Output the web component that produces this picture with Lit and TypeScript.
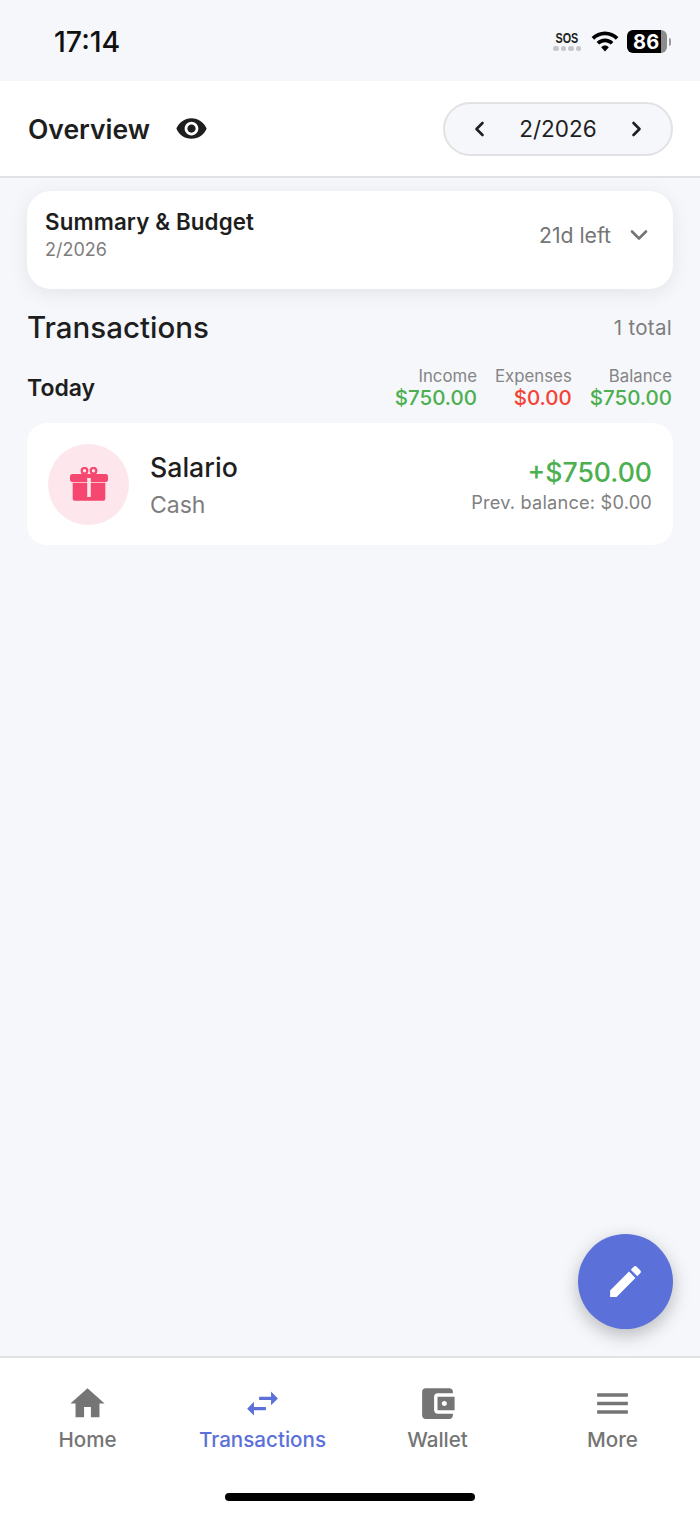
import { LitElement, html, css } from "lit";
import { customElement } from "lit/decorators.js";

const ICONS = {
  eye: "M12 4.5C7 4.5 2.73 7.61 1 12c1.73 4.39 6 7.5 11 7.5s9.27-3.11 11-7.5c-1.73-4.39-6-7.5-11-7.5zM12 17c-2.76 0-5-2.24-5-5s2.24-5 5-5 5 2.24 5 5-2.24 5-5 5zm0-8c-1.66 0-3 1.34-3 3s1.34 3 3 3 3-1.34 3-3-1.34-3-3-3z",
  home: "M10 20v-6h4v6h5v-8h3L12 3 2 12h3v8z",
  swap: "M6.99 11L3 15l3.99 4v-3H14v-2H6.99v-3zM21 9l-3.99-4v3H10v2h7.01v3L21 9z",
  wallet: "M21 18v1c0 1.1-.9 2-2 2H5c-1.11 0-2-.9-2-2V5c0-1.1.89-2 2-2h14c1.1 0 2 .9 2 2v1h-9c-1.11 0-2 .9-2 2v8c0 1.1.89 2 2 2h9zm-9-2h10V8H12v8zm4-2.5c-.83 0-1.5-.67-1.5-1.5s.67-1.5 1.5-1.5 1.5.67 1.5 1.5-.67 1.5-1.5 1.5z",
  menu: "M3 18h18v-2H3v2zm0-5h18v-2H3v2zm0-7v2h18V6H3z",
  edit: "M3 17.25V21h3.75L17.81 9.94l-3.75-3.75L3 17.25zM20.71 7.04c.39-.39.39-1.02 0-1.41l-2.34-2.34c-.39-.39-1.02-.39-1.41 0l-1.83 1.83 3.75 3.75 1.83-1.83z",
};

const icon = (d: string, size: number, cls = "") => html`<svg class=${cls} width=${size} height=${size} viewBox="0 0 24 24" fill="currentColor"><path d=${d}></path></svg>`;
const chevron = (points: string, w: number, h: number, sw: number, color: string) =>
  html`<svg width=${w} height=${h} viewBox="0 0 ${w} ${h}" fill="none" stroke=${color} stroke-width=${sw} stroke-linecap="round" stroke-linejoin="round"><polyline points=${points}></polyline></svg>`;

@customElement("app-root")
export class AppRoot extends LitElement {
  static styles = css`
    :host { display: flex; flex-direction: column; position: relative; height: 1515px; width: 700px; overflow: hidden; background: #f5f7fb; font-family: Inter, "Liberation Sans", sans-serif; color: #1f1f1f; }
    svg { display: block; flex: none; }
    .status { height: 81px; flex: none; display: flex; justify-content: space-between; align-items: center; padding: 0 29px 0 54px; box-sizing: border-box; }
    .time { font-size: 28.5px; font-weight: 500; color: #111; line-height: 1; margin-top: 3px; }
    .status-right { display: flex; align-items: center; gap: 8px; margin-top: 2px; }
    .sos { display: flex; flex-direction: column; align-items: center; gap: 2px; width: 28px; margin-right: 2px; }
    .sos-text { font-family: "Liberation Sans", sans-serif; font-size: 15px; font-weight: 700; line-height: 12px; color: #222; transform: scaleX(.72); }
    .dots { display: flex; gap: 2px; }
    .dots i { width: 5.5px; height: 5.5px; border-radius: 50%; background: #c6c6c8; }
    .battery { display: flex; align-items: center; gap: 2px; }
    .batt-body { width: 40px; height: 23px; border-radius: 6px; overflow: hidden; background: linear-gradient(90deg, #000 0 34px, #8c8c8e 34px); color: #fff; font-size: 20px; font-weight: 700; display: flex; align-items: center; padding-left: 6px; box-sizing: border-box; line-height: 1; letter-spacing: .3px; }
    .batt-tip { width: 2px; height: 8px; border-radius: 0 2px 2px 0; background: #9a9a9c; }
    .header { height: 97px; flex: none; box-sizing: border-box; background: #fff; border-bottom: 2px solid #e2e2e4; display: flex; align-items: center; justify-content: space-between; padding: 0 27px 0 28px; }
    .h-left { display: flex; align-items: center; gap: 25px; }
    .h-title { font-size: 26.5px; font-weight: 600; color: #1e1e1e; }
    .eye { color: #1e1e1e; }
    .month { width: 230px; height: 54px; box-sizing: border-box; border: 2px solid #e2e2e4; border-radius: 27px; background: #f5f7fb; display: flex; align-items: center; justify-content: space-between; padding: 0 27px; font-size: 22.5px; color: #1f1f1f; }
    .content { flex: 1; min-height: 0; display: flex; flex-direction: column; padding: 13px 28px 0; }
    .summary { height: 98px; flex: none; margin: 0 -1px; box-sizing: border-box; background: #fff; border-radius: 24px; box-shadow: 0 4px 20px rgba(0,0,0,.08); display: flex; align-items: center; justify-content: space-between; padding: 0 25px 9px 18px; }
    .s-title { font-size: 22.3px; font-weight: 600; line-height: 28px; color: #1e1e1e; letter-spacing: .15px; }
    .s-sub { font-size: 18px; line-height: 28px; color: #7d7d7d; }
    .s-right { display: flex; align-items: center; gap: 19px; font-size: 21.2px; color: #757575; margin-bottom: 1px; }
    .t-head { display: flex; justify-content: space-between; align-items: center; margin-top: 20px; height: 36px; }
    .t-title { font-size: 29.5px; font-weight: 500; color: #1e1e1e; margin-left: -1px; }
    .t-total { font-size: 20.5px; letter-spacing: .3px; color: #7d7d7d; }
    .day { display: flex; justify-content: space-between; align-items: center; margin-top: 20px; height: 44px; }
    .today { font-size: 23px; font-weight: 600; color: #1e1e1e; margin: 1px 0 0 -1px; }
    .totals { display: flex; gap: 18px; margin-top: 2px; }
    .col { display: flex; flex-direction: column; align-items: flex-end; }
    .lbl { font-size: 16.8px; line-height: 20px; color: #858585; }
    .val { font-size: 20.5px; font-weight: 500; line-height: 24px; }
    .green { color: #4caf50; }
    .red { color: #f44336; }
    .card { height: 122px; flex: none; margin: 14px -1px 0; box-sizing: border-box; background: #fff; border-radius: 20px; display: flex; align-items: center; padding: 0 21px; }
    .circle { width: 81px; height: 81px; border-radius: 50%; background: #fde6ec; display: flex; align-items: center; justify-content: center; }
    .c-text { margin-left: 21px; flex: 1; padding-top: 8px; }
    .name { font-size: 26.7px; font-weight: 500; line-height: 33px; color: #1e1e1e; }
    .acct { font-size: 23px; line-height: 42px; color: #7d7d7d; }
    .c-right { display: flex; flex-direction: column; align-items: flex-end; padding-top: 2px; }
    .amt { font-size: 26.6px; font-weight: 500; line-height: 34px; }
    .prev { font-size: 18.2px; line-height: 27px; color: #808080; letter-spacing: .2px; }
    .fab { position: absolute; left: 578px; top: 1234px; width: 95px; height: 95px; border-radius: 50%; background: #5b71d9; color: #fff; display: flex; align-items: center; justify-content: center; box-shadow: 0 6px 18px rgba(0,0,0,.25); }
    .tabs { height: 159px; flex: none; box-sizing: border-box; background: #fff; border-top: 2px solid #e2e2e4; position: relative; display: grid; grid-template-columns: repeat(4, 175px); }
    .tab { display: flex; flex-direction: column; align-items: center; padding-top: 25px; color: #757575; font-size: 20.6px; font-weight: 500; line-height: 30px; }
    .tab.on { color: #5b71d9; }
    .tab svg { margin-bottom: 1px; }
    .indicator { position: absolute; left: 225px; bottom: 14px; width: 250px; height: 8px; border-radius: 4px; background: #000; }
  `;

  render() {
    return html`
      <div class="status">
        <div class="time">17:14</div>
        <div class="status-right">
          <div class="sos"><span class="sos-text">SOS</span><span class="dots"><i></i><i></i><i></i><i></i></span></div>
          <svg width="28" height="21" viewBox="0 0 28 21" fill="#000">
            <path d="M14 0.5C8.8 .5 4.2 2.6 .6 6l2.6 2.7C6 6 9.8 4.3 14 4.3S22 6 24.8 8.7L27.4 6C23.8 2.6 19.2 .5 14 .5z"></path>
            <path d="M14 7.5c-3.2 0-6.2 1.3-8.4 3.4l2.6 2.7c1.5-1.5 3.5-2.4 5.8-2.4s4.3.9 5.8 2.4l2.6-2.7C20.2 8.8 17.2 7.5 14 7.5z"></path>
            <path d="M14 14.6c-1.5 0-2.8.6-3.8 1.6L14 20.4l3.8-4.2c-1-1-2.3-1.6-3.8-1.6z"></path>
          </svg>
          <div class="battery"><div class="batt-body">86</div><div class="batt-tip"></div></div>
        </div>
      </div>
      <div class="header">
        <div class="h-left"><div class="h-title">Overview</div>${icon(ICONS.eye, 33, "eye")}</div>
        <div class="month">
          ${chevron("10.5,6 4.5,12 10.5,18", 14, 24, 2.6, "#1f1f1f")}
          <span>2/2026</span>
          ${chevron("3.5,6 9.5,12 3.5,18", 14, 24, 2.6, "#1f1f1f")}
        </div>
      </div>
      <div class="content">
        <div class="summary">
          <div><div class="s-title">Summary &amp; Budget</div><div class="s-sub">2/2026</div></div>
          <div class="s-right"><span>21d left</span>${chevron("2,2.5 9,9.5 16,2.5", 18, 12, 2.6, "#757575")}</div>
        </div>
        <div class="t-head"><div class="t-title">Transactions</div><div class="t-total">1 total</div></div>
        <div class="day">
          <div class="today">Today</div>
          <div class="totals">
            <div class="col"><span class="lbl">Income</span><span class="val green">$750.00</span></div>
            <div class="col"><span class="lbl">Expenses</span><span class="val red">$0.00</span></div>
            <div class="col"><span class="lbl">Balance</span><span class="val green">$750.00</span></div>
          </div>
        </div>
        <div class="card">
          <div class="circle">
            <svg width="38" height="34" viewBox="0 0 38 34" fill="#f5476f">
              <circle cx="14.500" cy="3.800" r="2.800" fill="none" stroke="#f5476f" stroke-width="2.200"></circle>
              <circle cx="23.500" cy="3.800" r="2.800" fill="none" stroke="#f5476f" stroke-width="2.200"></circle>
              <rect x="0" y="7" width="38" height="8" rx="2.500"></rect>
              <path d="M2.700 15.800h32.600v16a2 2 0 0 1-2 2H4.700a2 2 0 0 1-2-2z"></path>
              <rect x="17.200" y="11" width="3.600" height="19" fill="#fde6ec"></rect>
            </svg>
          </div>
          <div class="c-text"><div class="name">Salario</div><div class="acct">Cash</div></div>
          <div class="c-right"><div class="amt green">+$750.00</div><div class="prev">Prev. balance: $0.00</div></div>
        </div>
      </div>
      <div class="fab">${icon(ICONS.edit, 41)}</div>
      <div class="tabs">
        <div class="tab">${icon(ICONS.home, 41)}<span>Home</span></div>
        <div class="tab on">${icon(ICONS.swap, 41)}<span>Transactions</span></div>
        <div class="tab">${icon(ICONS.wallet, 41)}<span>Wallet</span></div>
        <div class="tab">${icon(ICONS.menu, 41)}<span>More</span></div>
        <div class="indicator"></div>
      </div>
    `;
  }
}
